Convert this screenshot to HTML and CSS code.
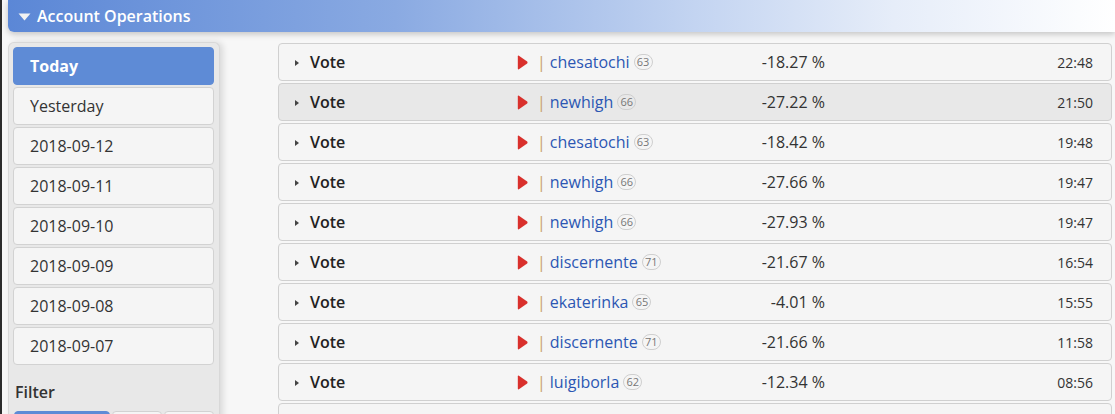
FILE: index.html
```html
<!DOCTYPE html>
<html>
<head>
<meta charset="utf-8">
<link rel="stylesheet" href="styles.css">
</head>
<body>
<div class="page">
  <div class="header">
    <svg class="hdr-caret" width="13" height="8" viewBox="0 0 13 8"><path d="M0.5 0.5 L12.5 0.5 L6.5 7.5 Z" fill="#f2f2f2"/></svg>
    <span>Account Operations</span>
  </div>
  <div class="content">
    <aside class="sidebar">
      <div class="day active">Today</div>
      <div class="day">Yesterday</div>
      <div class="day">2018-09-12</div>
      <div class="day">2018-09-11</div>
      <div class="day">2018-09-10</div>
      <div class="day">2018-09-09</div>
      <div class="day">2018-09-08</div>
      <div class="day">2018-09-07</div>
      <div class="filter-title">Filter</div>
      <div class="filter-btns">
        <div class="fbtn fbtn-main active"></div>
        <div class="fbtn fbtn-sm"></div>
        <div class="fbtn fbtn-sm"></div>
      </div>
    </aside>
    <main class="list">
      <div class="row"><div class="c-type"><span class="caret"></span>Vote</div><div class="c-who"><svg class="play" width="11" height="15" viewBox="0 0 11 15"><path d="M0.8 1.4 Q0.8 0.2 1.9 0.8 L10.2 6.6 Q11 7.5 10.2 8.4 L1.9 14.2 Q0.8 14.8 0.8 13.6 Z" fill="#d9302c"/></svg><span class="sep">|</span><span class="name">chesatochi</span><span class="badge">63</span></div><div class="c-pct">-18.27 %</div><div class="c-time">22:48</div></div>
      <div class="row hover"><div class="c-type"><span class="caret"></span>Vote</div><div class="c-who"><svg class="play" width="11" height="15" viewBox="0 0 11 15"><path d="M0.8 1.4 Q0.8 0.2 1.9 0.8 L10.2 6.6 Q11 7.5 10.2 8.4 L1.9 14.2 Q0.8 14.8 0.8 13.6 Z" fill="#d9302c"/></svg><span class="sep">|</span><span class="name">newhigh</span><span class="badge">66</span></div><div class="c-pct">-27.22 %</div><div class="c-time">21:50</div></div>
      <div class="row"><div class="c-type"><span class="caret"></span>Vote</div><div class="c-who"><svg class="play" width="11" height="15" viewBox="0 0 11 15"><path d="M0.8 1.4 Q0.8 0.2 1.9 0.8 L10.2 6.6 Q11 7.5 10.2 8.4 L1.9 14.2 Q0.8 14.8 0.8 13.6 Z" fill="#d9302c"/></svg><span class="sep">|</span><span class="name">chesatochi</span><span class="badge">63</span></div><div class="c-pct">-18.42 %</div><div class="c-time">19:48</div></div>
      <div class="row"><div class="c-type"><span class="caret"></span>Vote</div><div class="c-who"><svg class="play" width="11" height="15" viewBox="0 0 11 15"><path d="M0.8 1.4 Q0.8 0.2 1.9 0.8 L10.2 6.6 Q11 7.5 10.2 8.4 L1.9 14.2 Q0.8 14.8 0.8 13.6 Z" fill="#d9302c"/></svg><span class="sep">|</span><span class="name">newhigh</span><span class="badge">66</span></div><div class="c-pct">-27.66 %</div><div class="c-time">19:47</div></div>
      <div class="row"><div class="c-type"><span class="caret"></span>Vote</div><div class="c-who"><svg class="play" width="11" height="15" viewBox="0 0 11 15"><path d="M0.8 1.4 Q0.8 0.2 1.9 0.8 L10.2 6.6 Q11 7.5 10.2 8.4 L1.9 14.2 Q0.8 14.8 0.8 13.6 Z" fill="#d9302c"/></svg><span class="sep">|</span><span class="name">newhigh</span><span class="badge">66</span></div><div class="c-pct">-27.93 %</div><div class="c-time">19:47</div></div>
      <div class="row"><div class="c-type"><span class="caret"></span>Vote</div><div class="c-who"><svg class="play" width="11" height="15" viewBox="0 0 11 15"><path d="M0.8 1.4 Q0.8 0.2 1.9 0.8 L10.2 6.6 Q11 7.5 10.2 8.4 L1.9 14.2 Q0.8 14.8 0.8 13.6 Z" fill="#d9302c"/></svg><span class="sep">|</span><span class="name">discernente</span><span class="badge">71</span></div><div class="c-pct">-21.67 %</div><div class="c-time">16:54</div></div>
      <div class="row"><div class="c-type"><span class="caret"></span>Vote</div><div class="c-who"><svg class="play" width="11" height="15" viewBox="0 0 11 15"><path d="M0.8 1.4 Q0.8 0.2 1.9 0.8 L10.2 6.6 Q11 7.5 10.2 8.4 L1.9 14.2 Q0.8 14.8 0.8 13.6 Z" fill="#d9302c"/></svg><span class="sep">|</span><span class="name">ekaterinka</span><span class="badge">65</span></div><div class="c-pct">-4.01 %</div><div class="c-time">15:55</div></div>
      <div class="row"><div class="c-type"><span class="caret"></span>Vote</div><div class="c-who"><svg class="play" width="11" height="15" viewBox="0 0 11 15"><path d="M0.8 1.4 Q0.8 0.2 1.9 0.8 L10.2 6.6 Q11 7.5 10.2 8.4 L1.9 14.2 Q0.8 14.8 0.8 13.6 Z" fill="#d9302c"/></svg><span class="sep">|</span><span class="name">discernente</span><span class="badge">71</span></div><div class="c-pct">-21.66 %</div><div class="c-time">11:58</div></div>
      <div class="row"><div class="c-type"><span class="caret"></span>Vote</div><div class="c-who"><svg class="play" width="11" height="15" viewBox="0 0 11 15"><path d="M0.8 1.4 Q0.8 0.2 1.9 0.8 L10.2 6.6 Q11 7.5 10.2 8.4 L1.9 14.2 Q0.8 14.8 0.8 13.6 Z" fill="#d9302c"/></svg><span class="sep">|</span><span class="name">luigiborla</span><span class="badge">62</span></div><div class="c-pct">-12.34 %</div><div class="c-time">08:56</div></div>
      <div class="row"></div>
    </main>
  </div>
</div>
</body>
</html>
```
FILE: styles.css
```css
html, body {
  margin: 0;
  padding: 0;
  height: 100%;
  overflow: hidden;
}
body {
  background: #2b2b2b;
  font-family: "Open Sans", "Liberation Sans", sans-serif;
  color: #333;
}
.page {
  margin-left: 2px;
  padding-left: 6px;
  background: #f7f7f7;
  min-height: 100%;
}
.header {
  height: 32px;
  display: flex;
  align-items: center;
  background: linear-gradient(to right, #5b87d6 0%, #8aaae2 35%, #c3d4f1 62%, #e6edf9 80%, #ffffff 100%);
  border-bottom-left-radius: 6px;
  box-shadow: 0 2px 6px rgba(0, 0, 0, 0.22);
  color: #fff;
  font-size: 16px;
  font-weight: 600;
  position: relative;
  z-index: 2;
}
.hdr-caret {
  margin-left: 10px;
  margin-right: 6px;
  margin-top: 1px;
}
.content {
  display: flex;
  align-items: flex-start;
}
.sidebar {
  width: 201px;
  margin-top: 10px;
  padding: 4px 5px 0 4px;
  background: #e8e8e8;
  border: 1px solid #d8d8d8;
  border-bottom: none;
  border-radius: 6px 6px 0 0;
  box-shadow: 3px 0 6px rgba(0, 0, 0, 0.12);
  height: 400px;
}
.day {
  height: 36px;
  line-height: 36px;
  border: 1px solid #d2d2d2;
  border-radius: 4px;
  background: #f5f5f5;
  padding-left: 16px;
  font-size: 16px;
  color: #333;
  margin-bottom: 2px;
}
.day.active {
  background: #5e8bd6;
  border-color: #5e8bd6;
  color: #fff;
  font-weight: 700;
}
.filter-title {
  margin-top: 16px;
  margin-left: 2px;
  font-size: 16px;
  font-weight: 600;
  color: #333;
  line-height: 22px;
}
.filter-btns {
  display: flex;
  gap: 2px;
  margin-top: 8px;
  margin-left: 1px;
}
.fbtn {
  height: 34px;
  border: 1px solid #d2d2d2;
  border-radius: 4px;
  background: #f5f5f5;
}
.fbtn-main {
  width: 95px;
}
.fbtn-sm {
  width: 49px;
}
.fbtn.active {
  background: #5e8bd6;
  border-color: #5e8bd6;
}
.list {
  margin-left: 58px;
  margin-top: 11px;
  width: 834px;
}
.row {
  display: flex;
  align-items: center;
  height: 36px;
  border: 1px solid #d0d0d0;
  border-radius: 4px;
  background: #f5f5f5;
  margin-bottom: 2px;
}
.row.hover {
  background: #e8e8e8;
}
.c-type {
  width: 222px;
  padding-left: 16px;
  display: flex;
  align-items: center;
  font-size: 16px;
  font-weight: 600;
  color: #222;
}
.caret {
  width: 0;
  height: 0;
  border-top: 3.5px solid transparent;
  border-bottom: 3.5px solid transparent;
  border-left: 4px solid #444;
  margin-right: 11px;
  margin-top: 1px;
}
.c-who {
  width: 183px;
  display: flex;
  align-items: center;
  font-size: 16px;
}
.play {
  margin-right: 9px;
}
.sep {
  color: #c9a26c;
  margin-right: 4px;
}
.name {
  color: #2c57b3;
}
.badge {
  margin-left: 4px;
  min-width: 13px;
  height: 14px;
  line-height: 14px;
  padding: 0 2px;
  border: 1px solid #cfcfcf;
  border-radius: 8px;
  font-size: 11px;
  color: #777;
  text-align: center;
}
.c-pct {
  width: 125px;
  text-align: right;
  font-size: 16px;
  color: #333;
}
.c-time {
  flex: 1;
  text-align: right;
  padding-right: 18px;
  font-size: 14px;
  color: #333;
}
```
